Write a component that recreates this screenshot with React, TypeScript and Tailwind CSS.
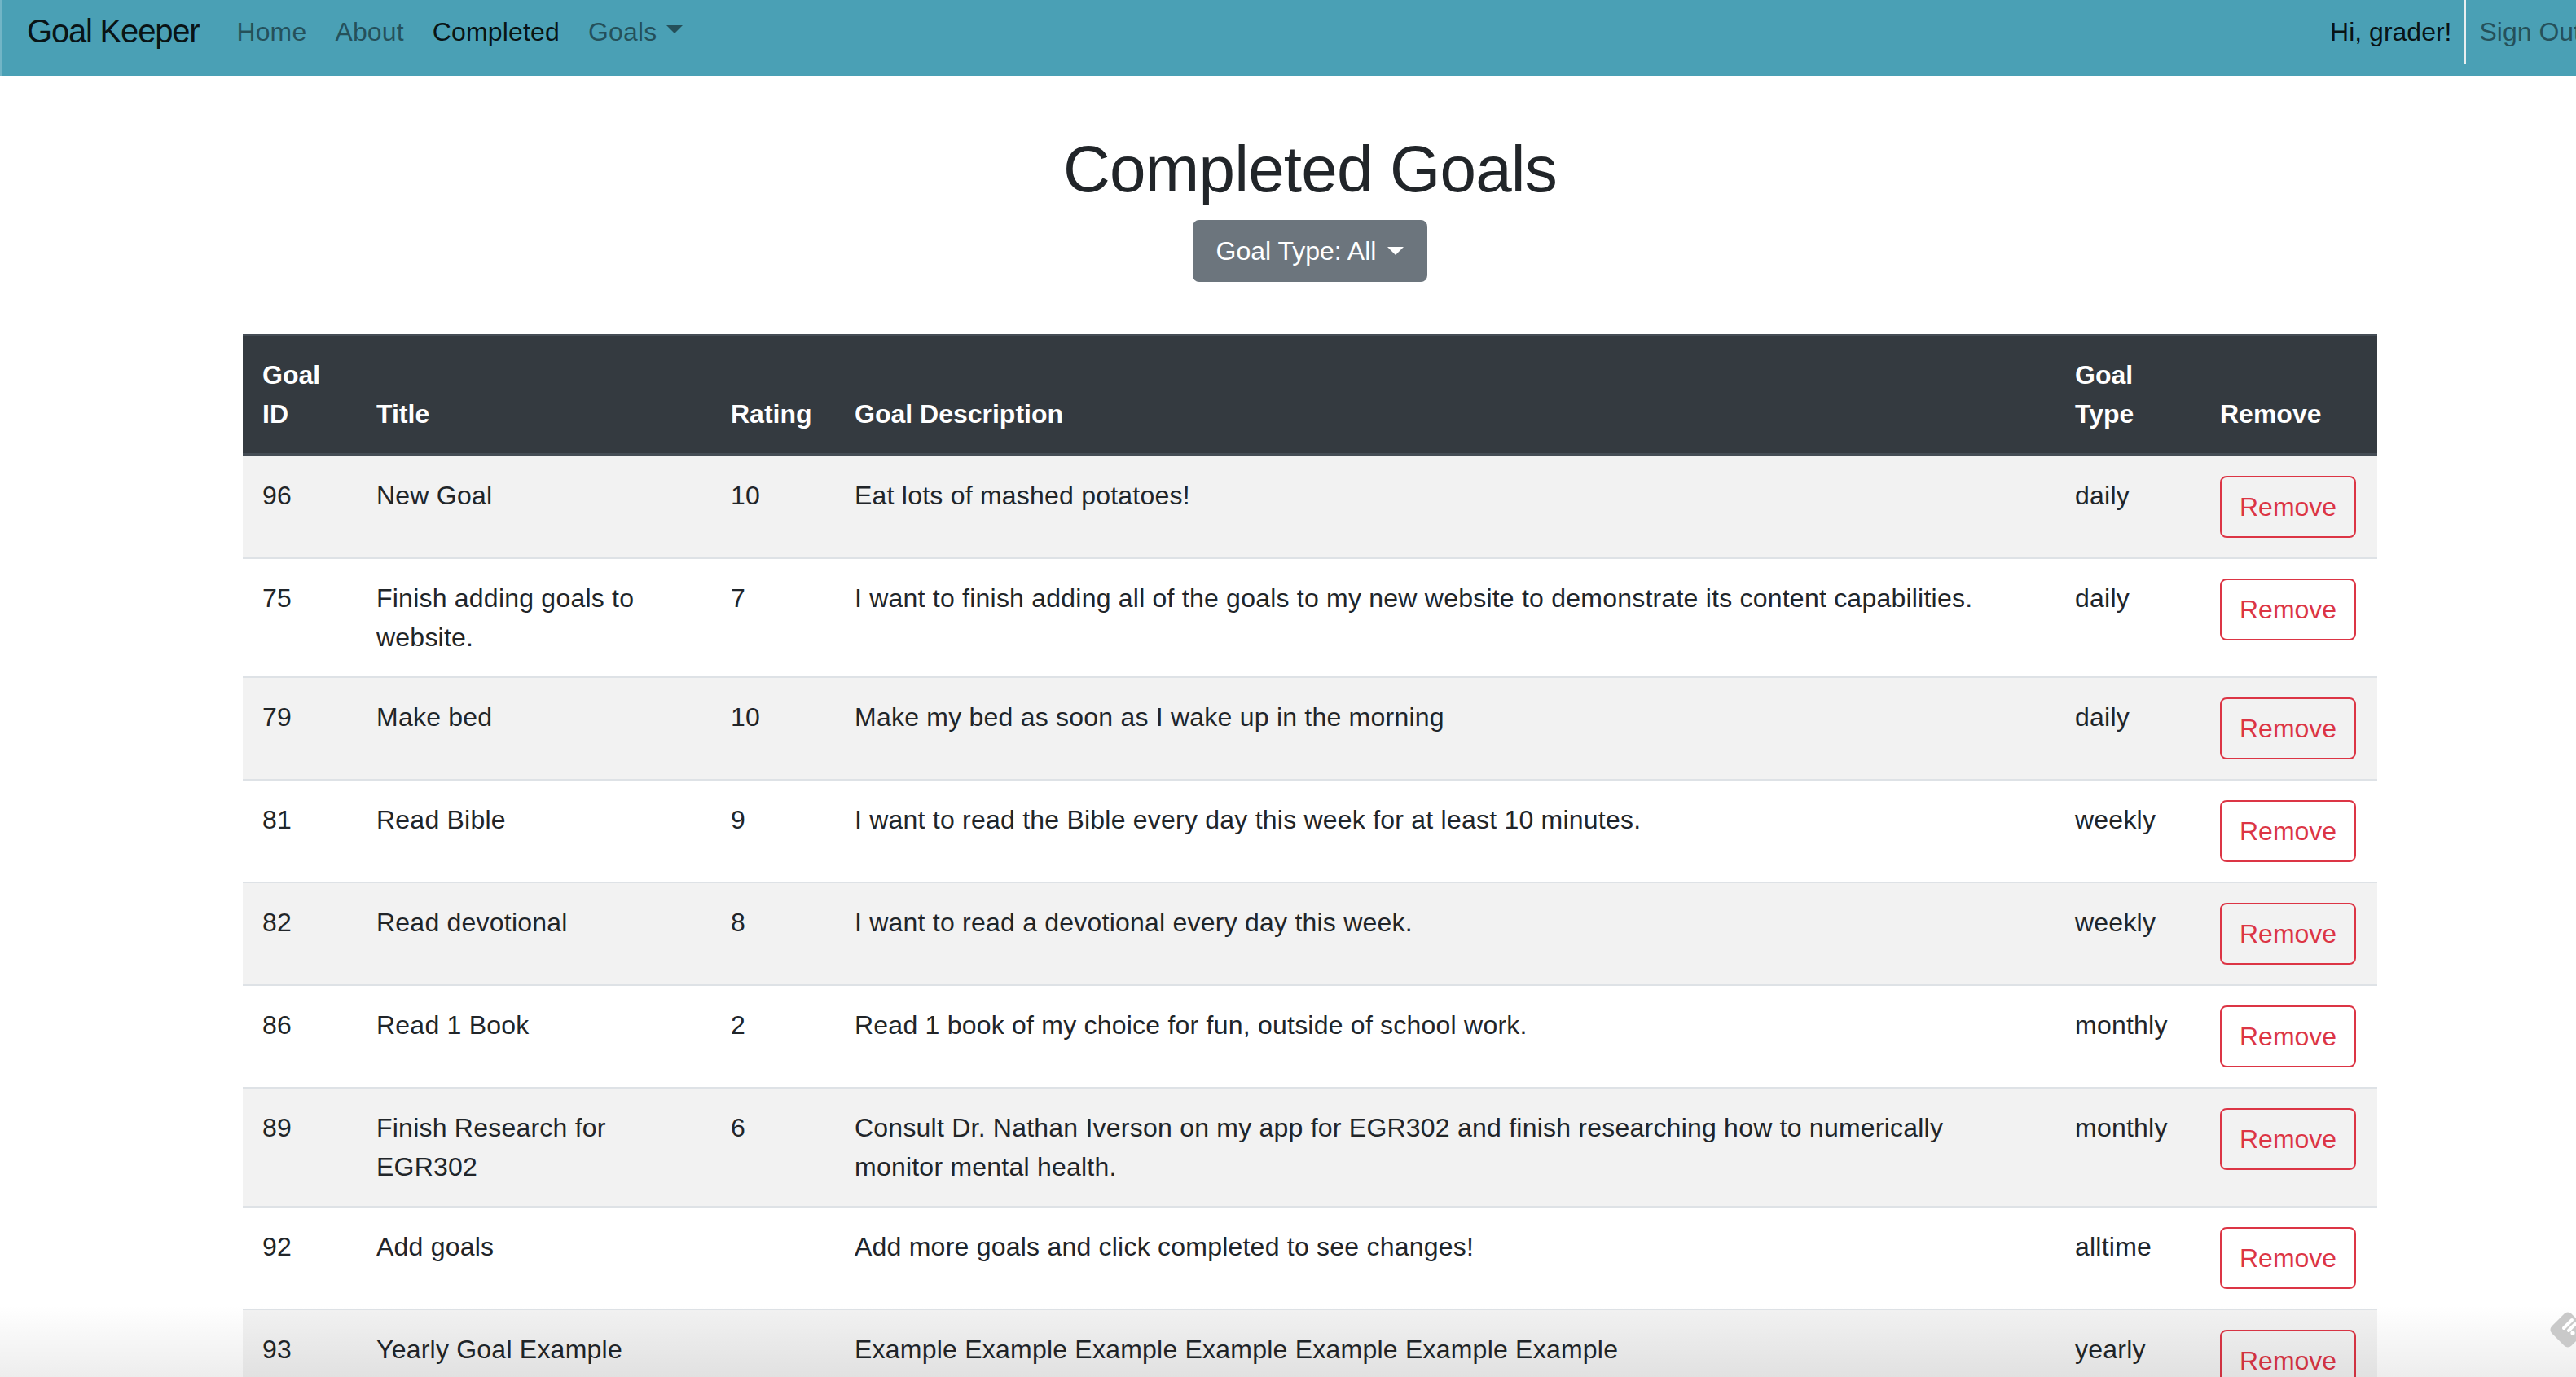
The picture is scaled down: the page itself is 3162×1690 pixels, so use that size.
import React from 'react';

interface Goal {
  id: number;
  title: string;
  rating?: number;
  description: string;
  type: string;
}

const goals: Goal[] = [
  { id: 96, title: 'New Goal', rating: 10, description: 'Eat lots of mashed potatoes!', type: 'daily' },
  {
    id: 75,
    title: 'Finish adding goals to website.',
    rating: 7,
    description:
      'I want to finish adding all of the goals to my new website to demonstrate its content capabilities.',
    type: 'daily',
  },
  { id: 79, title: 'Make bed', rating: 10, description: 'Make my bed as soon as I wake up in the morning', type: 'daily' },
  {
    id: 81,
    title: 'Read Bible',
    rating: 9,
    description: 'I want to read the Bible every day this week for at least 10 minutes.',
    type: 'weekly',
  },
  { id: 82, title: 'Read devotional', rating: 8, description: 'I want to read a devotional every day this week.', type: 'weekly' },
  {
    id: 86,
    title: 'Read 1 Book',
    rating: 2,
    description: 'Read 1 book of my choice for fun, outside of school work.',
    type: 'monthly',
  },
  {
    id: 89,
    title: 'Finish Research for EGR302',
    rating: 6,
    description:
      'Consult Dr. Nathan Iverson on my app for EGR302 and finish researching how to numerically monitor mental health.',
    type: 'monthly',
  },
  { id: 92, title: 'Add goals', description: 'Add more goals and click completed to see changes!', type: 'alltime' },
  {
    id: 93,
    title: 'Yearly Goal Example',
    description: 'Example Example Example Example Example Example Example',
    type: 'yearly',
  },
];

const Caret: React.FC<{ className?: string }> = ({ className }) => (
  <span
    className={`inline-block border-x-[10px] border-t-[10px] border-b-0 border-x-transparent border-t-current ${className ?? ''}`}
  />
);

const App: React.FC = () => {
  return (
    <div
      className="relative h-[1690px] w-full overflow-hidden bg-white text-[#212529]"
      style={{ fontFamily: '"Liberation Sans", Arial, sans-serif' }}
    >
      <div className="w-[3216px]">
        {/* Navbar */}
        <nav className="flex h-[93px] items-start border-l-2 border-[#72b5c6] bg-[#4aa0b5] pl-[31px] pr-[32px]">
          <a className="mt-[8px] mr-[46px] text-[40px] leading-[60px] tracking-[-0.03em] text-black/90">Goal Keeper</a>
          <ul className="mt-[15px] flex gap-[35px] text-[32px] leading-[48px] tracking-[0.005em]">
            <li className="text-black/50">Home</li>
            <li className="text-black/50">About</li>
            <li className="text-black/90">Completed</li>
            <li className="flex items-center gap-[12px] text-black/50">
              Goals
              <Caret className="mb-[6px]" />
            </li>
          </ul>
          <div className="ml-auto flex items-start text-[32px] leading-[48px]">
            <span className="mt-[15px] pr-[16px] text-black/90">Hi, grader!</span>
            <div className="h-[78px] border-r-2 border-[#e8eef0]" />
            <a className="mt-[15px] px-[16px] text-black/50">Sign Out</a>
          </div>
        </nav>

        {/* Page header */}
        <div className="flex flex-col items-center">
          <h1 className="mt-[67px] mb-[14px] text-[80px] leading-[96px] font-medium tracking-[-0.01em]">Completed Goals</h1>
          <button className="flex h-[76px] w-[288px] items-center justify-center gap-[14px] rounded-[8px] bg-[#6c757d] text-[32px] leading-[48px] text-white">
            Goal Type: All
            <Caret />
          </button>
        </div>

        {/* Goals table */}
        <table className="mx-auto mt-[64px] w-[2620px] table-fixed border-collapse text-[32px] leading-[48px]">
          <colgroup>
            <col className="w-[140px]" />
            <col className="w-[435px]" />
            <col className="w-[152px]" />
            <col className="w-[1498px]" />
            <col className="w-[178px]" />
            <col className="w-[217px]" />
          </colgroup>
          <thead>
            <tr className="bg-[#343a40] text-white">
              <th className="border-t-2 border-b-4 border-[#454d55] p-[24px] text-left align-bottom font-bold">Goal ID</th>
              <th className="border-t-2 border-b-4 border-[#454d55] p-[24px] text-left align-bottom font-bold">Title</th>
              <th className="border-t-2 border-b-4 border-[#454d55] p-[24px] text-left align-bottom font-bold">Rating</th>
              <th className="border-t-2 border-b-4 border-[#454d55] p-[24px] text-left align-bottom font-bold">Goal Description</th>
              <th className="border-t-2 border-b-4 border-[#454d55] p-[24px] text-left align-bottom font-bold">Goal Type</th>
              <th className="border-t-2 border-b-4 border-[#454d55] p-[24px] text-left align-bottom font-bold">Remove</th>
            </tr>
          </thead>
          <tbody className="tracking-[0.007em]">
            {goals.map((goal, index) => (
              <tr key={goal.id} className={index % 2 === 0 ? 'bg-[#f2f2f2]' : 'bg-white'}>
                <td className="border-t-2 border-[#dee2e6] p-[24px] align-top">{goal.id}</td>
                <td className="border-t-2 border-[#dee2e6] p-[24px] align-top">{goal.title}</td>
                <td className="border-t-2 border-[#dee2e6] p-[24px] align-top">{goal.rating ?? ''}</td>
                <td className="border-t-2 border-[#dee2e6] py-[24px] pl-[24px] pr-[60px] align-top">{goal.description}</td>
                <td className="border-t-2 border-[#dee2e6] p-[24px] align-top">{goal.type}</td>
                <td className="border-t-2 border-[#dee2e6] p-[24px] align-top">
                  <button className="h-[76px] rounded-[8px] border-2 border-[#dc3545] px-[22px] text-[32px] leading-[48px] tracking-normal text-[#dc3545]">
                    Remove
                  </button>
                </td>
              </tr>
            ))}
          </tbody>
        </table>
      </div>

      {/* bottom fade from the browser overlay */}
      <div className="pointer-events-none absolute inset-x-0 bottom-0 h-[88px] bg-gradient-to-b from-transparent to-black/[0.07]" />

      {/* feedly badge */}
      <svg className="absolute left-[3126px] top-[1606px]" width="52" height="52" viewBox="0 0 52 52">
        <rect x="9" y="9" width="34" height="34" rx="6" fill="#c9c9c9" transform="rotate(45 26 26)" />
        <g stroke="#ffffff" strokeWidth="4" strokeLinecap="round">
          <line x1="31" y1="14" x2="21" y2="24" />
          <line x1="35" y1="19" x2="27" y2="27" />
        </g>
        <circle cx="32" cy="30" r="2.6" fill="#ffffff" />
      </svg>
    </div>
  );
};

export default App;
